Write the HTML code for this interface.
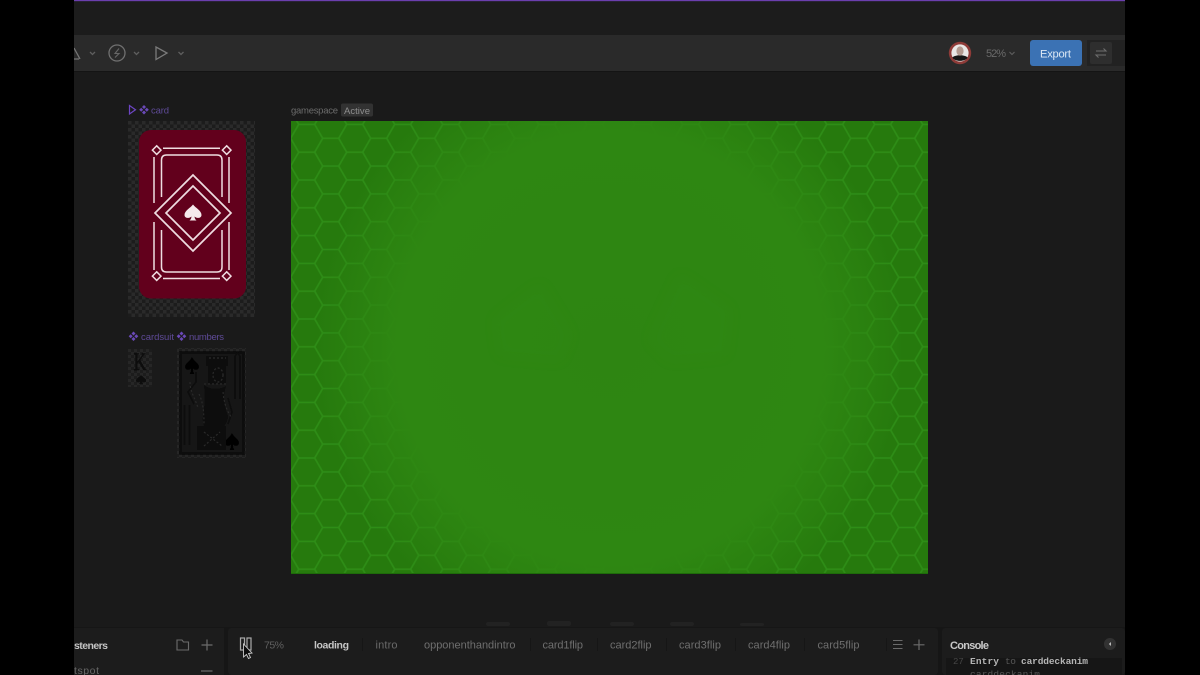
<!DOCTYPE html>
<html><head><meta charset="utf-8">
<style>
html,body{margin:0;padding:0;background:#000;width:1200px;height:675px;overflow:hidden}
svg{display:block}
text{font-family:"Liberation Sans",sans-serif}
</style></head><body>
<svg width="1200" height="675" viewBox="0 0 1200 675" xmlns="http://www.w3.org/2000/svg">
<defs>
<filter id="b" x="-5%" y="-5%" width="110%" height="110%"><feGaussianBlur stdDeviation="0.35"/></filter>
<filter id="bt" x="-5%" y="-20%" width="110%" height="140%"><feGaussianBlur stdDeviation="0.3"/></filter>
<filter id="soft" x="-30%" y="-30%" width="160%" height="160%"><feGaussianBlur stdDeviation="6"/></filter>
<pattern id="hex" patternUnits="userSpaceOnUse" width="48" height="27.8" x="306.7" y="138.3">
<rect width="48" height="27.8" fill="#277a0e"/>
<path d="M0 13.9H8L16 0H32L40 13.9H48 M8 13.9L16 27.8H32L40 13.9" fill="none" stroke="#2f8e17" stroke-width="1.6" stroke-linejoin="round"/>
</pattern>
<radialGradient id="g2" cx="0.5" cy="0.5" r="0.5" gradientUnits="objectBoundingBox">
<stop offset="0" stop-color="#2e8512" stop-opacity="1"/>
<stop offset="0.72" stop-color="#2e8712" stop-opacity="1"/>
<stop offset="0.87" stop-color="#2e8712" stop-opacity="0.5"/>
<stop offset="1" stop-color="#2e8712" stop-opacity="0"/>
</radialGradient>
<pattern id="chk" patternUnits="userSpaceOnUse" width="7" height="7" x="128" y="121">
<rect width="7" height="7" fill="#1c1c1c"/>
<rect width="3.5" height="3.5" fill="#2a2a2a"/><rect x="3.5" y="3.5" width="3.5" height="3.5" fill="#2a2a2a"/>
</pattern>
<pattern id="chk2" patternUnits="userSpaceOnUse" width="6" height="6" x="128" y="349">
<rect width="6" height="6" fill="#1b1b1b"/>
<rect width="3" height="3" fill="#272727"/><rect x="3" y="3" width="3" height="3" fill="#272727"/>
</pattern>
</defs>

<!-- main area -->
<rect x="74" y="0" width="1051" height="675" fill="#1a1a1a"/>
<rect x="74" y="0" width="1051" height="1.2" fill="#6b3fae"/>
<rect x="74" y="2" width="1051" height="33" fill="#1c1c1c"/>
<rect x="74" y="35" width="1051" height="36" fill="#2a2a2a"/>
<rect x="74" y="71" width="1051" height="1" fill="#141414"/>

<!-- toolbar left icons -->
<g filter="url(#b)" fill="none" stroke="#6a6a6a" stroke-width="1.3">
<path d="M74 48 L80 59 M74 59 H79" stroke="#767676"/>
<path d="M90 52 L92.5 54.5 L95 52" stroke="#5e5e5e"/>
<circle cx="117" cy="53" r="8" stroke="#707070"/>
<path d="M119 48.5 L115 53.5 H119 L115 57.5" stroke="#666" stroke-width="1.1"/>
<path d="M134 52 L136.5 54.5 L139 52" stroke="#5e5e5e"/>
<path d="M156 47 V59.5 L167 53 Z" stroke="#7a7a7a"/>
<path d="M178.5 52 L181 54.5 L183.5 52" stroke="#5e5e5e"/>
</g>

<!-- toolbar right -->
<g filter="url(#b)">
<circle cx="960" cy="53" r="11.2" fill="#8e3b37"/>
<circle cx="960" cy="53" r="8.6" fill="#e9e7e6"/>
<path d="M952.4 57.5 C955 54.5 965 54.5 967.6 57.5 C965.5 62 954.5 62 952.4 57.5Z" fill="#141414"/>
<ellipse cx="960" cy="51" rx="3.6" ry="4.6" fill="#b39a90"/>
<text x="986" y="57" font-size="11" fill="#6a6a6a" textLength="20">52%</text>
<path d="M1009.5 52 L1012 54.5 L1014.5 52" fill="none" stroke="#5e5e5e" stroke-width="1.1"/>
<rect x="1087" y="40" width="38" height="26" fill="#232323"/>
<rect x="1030" y="40" width="52" height="26" rx="3" fill="#3a72b4"/>
<text x="1040" y="57.3" font-size="11.2" fill="#dbe7f4" textLength="31">Export</text>
<rect x="1090" y="42" width="22" height="22" rx="2" fill="#2d2d2d"/>
<path d="M1096 51 H1106 L1103.5 48.5 M1106 55 H1096 L1098.5 57.5" fill="none" stroke="#6e6e6e" stroke-width="1.1"/>
</g>

<!-- labels -->
<g filter="url(#bt)">
<path d="M129.5 105.5 V114 L135.5 109.8 Z" fill="none" stroke="#6d45c4" stroke-width="1.2"/>
<g fill="#6a48b8">
<path d="M144 105 l2 2 l-2 2 l-2 -2Z M144 110.5 l2 2 l-2 2 l-2 -2Z M141.2 107.8 l2 2 l-2 2 l-2 -2Z M146.8 107.8 l2 2 l-2 2 l-2 -2Z"/>
</g>
<text x="151" y="113.3" font-size="9.5" fill="#5e4a97" textLength="18">card</text>
<text x="291" y="113.5" font-size="9.5" fill="#6c6c6c" textLength="47">gamespace</text>
<rect x="341" y="103.5" width="32" height="13" rx="2" fill="#333"/>
<text x="344" y="113.8" font-size="9.5" fill="#8d8d8d" textLength="26">Active</text>
<g fill="#6a48b8">
<path d="M133.5 331.5 l2 2 l-2 2 l-2 -2Z M133.5 337 l2 2 l-2 2 l-2 -2Z M130.7 334.3 l2 2 l-2 2 l-2 -2Z M136.3 334.3 l2 2 l-2 2 l-2 -2Z"/>
<path d="M181.5 331.5 l2 2 l-2 2 l-2 -2Z M181.5 337 l2 2 l-2 2 l-2 -2Z M178.7 334.3 l2 2 l-2 2 l-2 -2Z M184.3 334.3 l2 2 l-2 2 l-2 -2Z"/>
</g>
<text x="141" y="340" font-size="9.5" fill="#5e4a97" textLength="33">cardsuit</text>
<text x="189" y="340" font-size="9.5" fill="#5e4a97" textLength="35">numbers</text>
</g>

<!-- card back -->
<rect x="128" y="121" width="127" height="196" fill="url(#chk)" filter="url(#b)"/>
<g filter="url(#b)">
<rect x="139" y="130" width="107" height="168.500" rx="12" fill="#62041e"/>
<g fill="none" stroke="#efdde1" stroke-width="1.5">
<path d="M156.7 145.8 l4.3 4.3 l-4.3 4.3 l-4.3 -4.3Z"/>
<path d="M226.7 145.8 l4.3 4.3 l-4.3 4.3 l-4.3 -4.3Z"/>
<path d="M156.7 271.8 l4.3 4.3 l-4.3 4.3 l-4.3 -4.3Z"/>
<path d="M226.7 271.8 l4.3 4.3 l-4.3 4.3 l-4.3 -4.3Z"/>
<path d="M163 148.3 H220 M163 278.5 H220"/>
<path d="M154 157 V203 M154 222 V270 M229 157 V203 M229 222 V270"/>
<path d="M161.5 197 V160 Q161.5 155 166.5 155 H217 Q222 155 222 160 V197"/>
<path d="M161.5 230 V267 Q161.5 272 166.5 272 H217 Q222 272 222 267 V230"/>
<path d="M193 175 L231 213 L193 251 L155 213 Z" stroke-width="1.7"/>
<path d="M193 186 L220 213 L193 240 L166 213 Z" stroke-width="1.7"/>
</g>
<path d="M193 204.5 C195.5 208 201.5 210.5 201.5 215 C201.5 218 197.5 219 194.5 216.5 C194.7 218.5 195.3 219.5 196.5 220.5 H189.5 C190.7 219.5 191.3 218.5 191.5 216.500 C188.5 219 184.5 218 184.5 215 C184.5 210.5 190.5 208 193 204.5Z" fill="#f5e9ec"/>
</g>

<!-- cardsuit -->
<g filter="url(#b)">
<rect x="128" y="349" width="24" height="38" fill="url(#chk2)"/>
<text transform="translate(133.500 370) scale(.72 1)" font-size="25" fill="#0a0a0a" stroke="#0a0a0a" stroke-width="0.5" style="font-family:'Liberation Serif',serif">K</text>
<path d="M141 375 C142.5 377 146 378.5 146 380.5 C146 382.5 143.5 383 142 381.5 C142 382.5 142.5 383.5 143 384 H139 C139.5 383.5 140 382.5 140 381.5 C138.5 383 136 382.5 136 380.5 C136 378.5 139.5 377 141 375Z" fill="#0a0a0a"/>
</g>

<!-- king card -->
<g filter="url(#b)">
<rect x="177" y="348" width="69" height="110" fill="url(#chk2)"/>
<rect x="180.5" y="352.5" width="63" height="101" fill="#151515" stroke="#070707" stroke-width="2.5"/>
<path d="M192 357 C194 361 199 363 199 367 C199 370 195 371 193 368.5 C193 371 193.5 372.5 194.5 374 H189.5 C190.5 372.5 191 371 191 368.5 C189 371 185 370 185 367 C185 363 190 361 192 357Z" fill="#060606"/>
<path d="M232 433 C234 437 239 439 239 443 C239 446 235 447 233 444.5 C233 447 233.5 448.5 234.5 450 H229.5 C230.5 448.5 231 447 231 444.5 C229 447 225 446 225 443 C225 439 230 437 232 433Z" fill="#060606"/>
<path d="M204 385 C210 390 220 390 226 386 C223 396 223 402 228 416 C228 420 226 424 224 426 H204 C202 420 203 416 204 410 C205 402 205 392 204 385 Z" fill="#0a0a0a"/>
<path d="M206 356 H228 V366 H206 Z" fill="#0e0e0e"/>
<path d="M197 426 H226 V450 H197 Z" fill="#0e0e0e"/>
<path d="M208 366 H226 V384 H208 Z" fill="#101010"/>
<g fill="none" stroke="#080808" stroke-width="1.500">
<path d="M235 356 V399 M240 356 V399 M235 356 L237.5 353 L240 356"/>
<path d="M184.5 405 V445 M189.5 405 V445"/>
<path d="M196 372 V382 L188 392 L194 404"/>
<path d="M228 398 L232 412 L228 424"/>
</g>
<g fill="none" stroke="#2a2a2a" stroke-width="1.200" stroke-dasharray="2 2">
<path d="M190 382 C190 392 196 400 198 408"/>
<path d="M199 394 C203 402 204 412 204 424"/>
<path d="M223 392 C224 402 226 410 232 418"/>
<ellipse cx="218" cy="375" rx="5" ry="7"/>
<path d="M209 358 H226 M204 384 H226"/>
<path d="M204 432 L222 446 M204 446 L220 432"/>
</g>
</g>

<!-- green stage -->
<rect x="291" y="121" width="637" height="453" fill="url(#hex)" filter="url(#b)"/>
<svg x="291" y="121" width="637" height="453" viewBox="291 121 637 453">
<ellipse cx="610" cy="348" rx="295" ry="300" fill="url(#g2)"/>
<g fill="#308c14" opacity=".2" filter="url(#soft)">
<path d="M495 320 L540 285 L570 335 L560 360 L500 355Z"/>
<path d="M650 340 L680 275 L730 310 L725 355 L670 360Z"/>
</g>
</svg>
<rect x="291" y="573" width="637" height="1" fill="#1e6b0a"/>

<!-- faint strip above bottom panel -->
<g fill="#232323" filter="url(#b)">
<rect x="486" y="622" width="24" height="4" rx="2"/>
<rect x="547" y="621" width="24" height="5" rx="2"/>
<rect x="610" y="622" width="24" height="4" rx="2"/>
<rect x="670" y="622" width="24" height="4" rx="2"/>
<rect x="740" y="623" width="24" height="3" rx="2"/>
</g>

<!-- bottom panels -->
<g filter="url(#b)">
<rect x="74" y="627" width="1051" height="48" fill="#161616"/>
<rect x="74" y="628" width="150" height="47" fill="#1f1f1f"/>
<rect x="228" y="628" width="710" height="47" rx="4" fill="#1f1f1f"/>
<rect x="942" y="628" width="183" height="47" rx="4" fill="#1f1f1f"/>
<rect x="231" y="657" width="702" height="18" fill="#1a1a1a"/>
<rect x="301" y="630" width="60" height="27" fill="#1b1b1b"/>
<rect x="946" y="658" width="176" height="17" fill="#191919"/>

<text x="74" y="649" font-size="10.5" font-weight="bold" fill="#c4c4c4" textLength="34">steners</text>
<text x="74" y="674" font-size="10.5" fill="#666" textLength="25">tspot</text>
<path d="M177 640 H182 L183.5 642 H188.5 V650 H177 Z" fill="none" stroke="#6b6b6b" stroke-width="1.1"/>
<path d="M207 639.5 V650.5 M201.5 645 H212.5" stroke="#6b6b6b" stroke-width="1.2" fill="none"/>
<path d="M201 671 H212.5" stroke="#6b6b6b" stroke-width="1.2" fill="none"/>

<rect x="240.5" y="638" width="4" height="12" fill="none" stroke="#a8a8a8" stroke-width="1.2"/>
<rect x="247" y="638" width="4" height="12" fill="none" stroke="#a8a8a8" stroke-width="1.2"/>
<path d="M243.5 644 V657 L246.5 654.5 L248.5 658.5 L250.5 657.5 L248.5 653.5 L252 653 Z" fill="#111" stroke="#c8c8c8" stroke-width="0.9"/>
<text x="264" y="648.5" font-size="10.5" fill="#5f5f5f" textLength="20">75%</text>

<text x="314" y="648.5" font-size="10.5" font-weight="bold" fill="#c6c6c6" textLength="35">loading</text>
<text x="375.5" y="648.5" font-size="11" fill="#686868" textLength="22">intro</text>
<text x="424" y="648.5" font-size="11" fill="#6e6e6e" textLength="91.5">opponenthandintro</text>
<text x="542.5" y="648.5" font-size="11" fill="#6e6e6e" textLength="40.5">card1flip</text>
<text x="610" y="648.5" font-size="11" fill="#6e6e6e" textLength="41.5">card2flip</text>
<text x="679" y="648.5" font-size="11" fill="#6e6e6e" textLength="42">card3flip</text>
<text x="748" y="648.5" font-size="11" fill="#6e6e6e" textLength="42">card4flip</text>
<text x="817.5" y="648.5" font-size="11" fill="#6e6e6e" textLength="42">card5flip</text>
<g fill="#131313">
<rect x="362" y="638" width="1" height="13"/><rect x="530" y="638" width="1" height="13"/><rect x="597" y="638" width="1" height="13"/><rect x="666" y="638" width="1" height="13"/><rect x="735" y="638" width="1" height="13"/><rect x="804" y="638" width="1" height="13"/><rect x="886" y="638" width="1" height="13"/>
</g>
<path d="M893 640.5 H902.5 M893 644.5 H902.5 M893 648.5 H902.5" stroke="#6b6b6b" stroke-width="1.1" fill="none"/>
<path d="M919 639.5 V650 M913.5 644.8 H924.5" stroke="#6b6b6b" stroke-width="1.2" fill="none"/>

<text x="950" y="649" font-size="11" font-weight="bold" fill="#c8c8c8" textLength="39">Console</text>
<circle cx="1110" cy="644" r="6" fill="#333"/>
<path d="M1111 642 L1108.8 644 L1111 646 Z" fill="#bbb"/>
<text x="953" y="664" font-size="9" fill="#444" style="font-family:'Liberation Mono',monospace">27</text>
<text x="970" y="664" font-size="9.5" font-weight="bold" fill="#b5b5b5" textLength="29" style="font-family:'Liberation Mono',monospace">Entry</text>
<text x="1005" y="664" font-size="9.5" fill="#555" textLength="11" style="font-family:'Liberation Mono',monospace">to</text>
<text x="1021" y="664" font-size="9.5" font-weight="bold" fill="#b5b5b5" textLength="67" style="font-family:'Liberation Mono',monospace">carddeckanim</text>
<text x="970" y="677" font-size="9.5" fill="#555" textLength="70" style="font-family:'Liberation Mono',monospace">carddeckanim</text>
</g>

<!-- letterbox -->
<rect x="0" y="0" width="74" height="675" fill="#000"/>
<rect x="1125.5" y="0" width="75" height="675" fill="#000"/>
</svg>
</body></html>
